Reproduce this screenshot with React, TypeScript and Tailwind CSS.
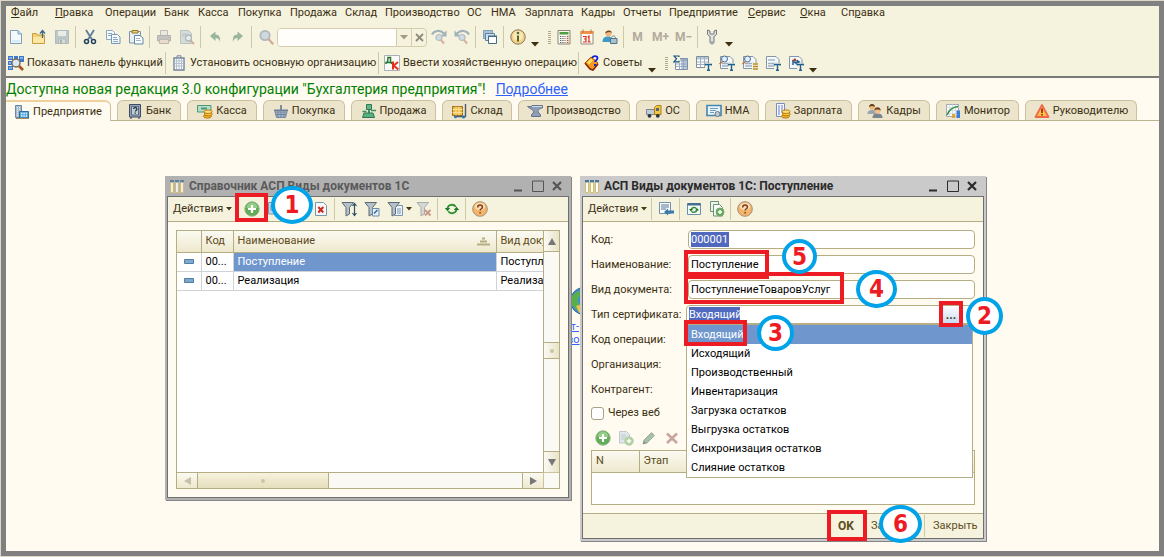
import React from "react";

type Kids = { children?: React.ReactNode };

/* ---------- icons ---------- */

function Svg({ children, dim }: Kids & { dim?: boolean }) {
  return (
    <svg width="16" height="16" viewBox="0 0 16 16" fill="none" aria-hidden="true" className={dim ? "shrink-0 opacity-50" : "shrink-0"}>
      {children}
    </svg>
  );
}

const Page = () => (
  <Svg>
    <path d="M2.500 1.500h7.500l3.500 3.500v9.500h-11z" fill="#f4f9fd" stroke="#7d9db8" />
    <path d="M10 1.500v3.500h3.500" fill="#cfe0ee" stroke="#7d9db8" />
    <path d="M4 11h8v2.500h-8z" fill="#dbe9f4" />
  </Svg>
);
const OpenFolder = () => (
  <Svg>
    <path d="M1.500 4.500h4l1 1.500h7v8.500h-12z" fill="#f3d27c" stroke="#c79d3e" />
    <path d="M2 8h11v6h-11z" fill="#fbe6a4" />
    <path d="M11.500 9V2.500M9 4.500l2.500-3 2.500 3" stroke="#3f6480" strokeWidth="1.300" />
  </Svg>
);
const Floppy = () => (
  <Svg dim>
    <path d="M1.500 1.500h13v13h-13z" fill="#8b9fb3" stroke="#6d8399" />
    <path d="M4 2h8v5H4z" fill="#dfe6ec" />
    <path d="M4.500 10h7v4.500h-7z" fill="#c0c8cf" stroke="#6d8399" />
    <path d="M6 11h2v3H6z" fill="#5d7389" />
  </Svg>
);
const Scissors = () => (
  <Svg>
    <path d="M4 1l6 9.500M12 1L6 10.500" stroke="#5d7e99" strokeWidth="1.800" />
    <circle cx="4.500" cy="12.500" r="2" stroke="#23425e" strokeWidth="1.500" />
    <circle cx="11.500" cy="12.500" r="2" stroke="#23425e" strokeWidth="1.500" />
  </Svg>
);
const CopyDocs = () => (
  <Svg>
    <path d="M1.500 1.500h6l2 2v7h-8z" fill="#f4f9fd" stroke="#8ba8c0" />
    <path d="M3 4.500h4M3 6.500h4" stroke="#8ba8c0" />
    <path d="M6.500 5.500h6l2.500 2.500v6.500h-8.500z" fill="#f4f9fd" stroke="#7896b0" />
    <path d="M8 8.500h4M8 10.500h5M8 12.500h5" stroke="#8ba8c0" />
  </Svg>
);
const Paste = () => (
  <Svg>
    <path d="M1.500 2.500h11v11.500h-11z" fill="#e8eef2" stroke="#8295a5" />
    <path d="M4 1.500h6v2.500H4z" fill="#f2d36b" stroke="#8a7433" />
    <path d="M6.500 6.500h5.500l3 2.500v6h-8.500z" fill="#fdfeff" stroke="#5f88a8" />
    <path d="M8 9.500h4M8 11.500h5" stroke="#9db6c9" />
  </Svg>
);
const Printer = () => (
  <Svg dim>
    <path d="M4.500 1.500h7v5h-7z" fill="#e6dfe0" stroke="#8a8590" />
    <path d="M1.500 6.500h13v5.500h-13z" fill="#8f97a6" stroke="#6f7786" />
    <path d="M3.500 10.500h9v4h-9z" fill="#d9c9c0" stroke="#8a7f80" />
    <path d="M11 8h2v1h-2z" fill="#d66a50" />
  </Svg>
);
const Preview = () => (
  <Svg dim>
    <path d="M1.500 1.500h8l3 3v10h-11z" fill="#b9c9d6" stroke="#7b93a8" />
    <path d="M3 5h5M3 7h4" stroke="#7b93a8" />
    <circle cx="9.500" cy="9" r="3" fill="#d8e6f4" stroke="#69809a" strokeWidth="1.300" />
    <path d="M11.500 11.500l3.500 3.500" stroke="#b06c4a" strokeWidth="2" />
  </Svg>
);
const Undo = () => (
  <Svg dim>
    <path d="M3 7l5.500-4.500v3c4 0 5 3 4.500 7.500-.8-3-2-4-4.500-4v3z" fill="#3f7d5c" />
  </Svg>
);
const Redo = () => (
  <Svg dim>
    <path d="M13 7L7.500 2.500v3c-4 0-5 3-4.500 7.500.8-3 2-4 4.500-4v3z" fill="#3f7d5c" />
  </Svg>
);
const Magnifier = () => (
  <Svg dim>
    <circle cx="7" cy="6.500" r="4.700" fill="#a9c0e0" stroke="#6d7f9e" strokeWidth="1.700" />
    <path d="M10.500 10l4 4.500" stroke="#a76b60" strokeWidth="2.400" strokeLinecap="round" />
  </Svg>
);
const FindTurn = ({ back }: { back?: boolean }) => (
  <Svg dim>
    <g transform={back ? "matrix(-1 0 0 1 16 0)" : undefined}>
      <path d="M1 5.500C3 1.500 9 .5 13 4.500" stroke="#4f7396" strokeWidth="2.200" />
      <path d="M15.500 1.500v6H9.500z" fill="#4f7396" />
    </g>
    <circle cx="8" cy="8.500" r="3" fill="#a9c6ec" stroke="#7a86a0" strokeWidth="1.200" />
    <path d="M10 11l3 3.500" stroke="#b8735e" strokeWidth="2" />
  </Svg>
);
const Windows = () => (
  <Svg>
    <path d="M1.500 1.500h9v8h-9z" fill="#a8c2d6" stroke="#7f9fb6" />
    <path d="M3.500 4.500h9v7h-9z" fill="#cfdfeb" stroke="#5d849f" />
    <path d="M6.500 7.500h8v7h-8z" fill="#fff" stroke="#426c8b" />
    <path d="M6 6.500h9V8H6z" fill="#426c8b" />
  </Svg>
);
const Info = () => (
  <Svg>
    <circle cx="8" cy="8" r="7.200" fill="#f5cf85" stroke="#8b7a5c" />
    <circle cx="8" cy="7" r="5" fill="#fbe7b8" />
    <path d="M8 6.500v6" stroke="#4d6b2c" strokeWidth="2" />
    <circle cx="8" cy="4" r="1.300" fill="#4d6b2c" />
  </Svg>
);
const Calculator = () => (
  <Svg>
    <path d="M2 1.500h12v13.500H2z" fill="#fbf8ee" stroke="#8c8576" />
    <path d="M3.500 3h9v2.500h-9z" fill="#4f9d47" />
    {[7.5, 9.5, 11.5, 13.5].map((y) => (
      <g key={y}>
        <path d={`M4 ${y}h5.500`} stroke="#5c646b" strokeWidth="1.200" strokeDasharray="1.300 1" />
        <path d={`M10.800 ${y}h1.700`} stroke="#c25a3a" strokeWidth="1.200" />
      </g>
    ))}
  </Svg>
);
const Calendar = () => (
  <Svg>
    <path d="M2 2.500h12v12.500H2z" fill="#fdfbf6" stroke="#998b7c" />
    <path d="M1.500 2h13v3h-13z" fill="#ee9148" />
    <path d="M4 .5v3M12 .5v3" stroke="#b5703a" />
    <path d="M4 7.500h3v5.500H4M5 10h2M10 13V7L8.700 8.200M8.700 13h3" stroke="#e0311c" strokeWidth="1.200" />
  </Svg>
);
const UserLock = () => (
  <Svg>
    <path d="M0.500 13c0-4 2-5.500 5.500-5.500s4 1.500 4.500 5.500z" fill="#3d9bc4" />
    <circle cx="6.500" cy="4.500" r="3" fill="#f0b77c" />
    <path d="M3.200 4.500C3 1 10 0 9.800 4c-2-1.500-4.500-1-6.600.5z" fill="#6e4a22" />
    <path d="M9.500 9.500c0-3.500 4-3.500 4 0" stroke="#6d8290" />
    <path d="M8.500 9.500h6.500v5H8.500z" fill="#a9c1d0" stroke="#567286" />
  </Svg>
);
const Wrench = () => (
  <Svg>
    <path d="M3.500 1v4.500L6 7.500V13c0 2.500 4 2.500 4 0V7.500l2.500-2V1L10 2v3H6V2z" fill="#dfe1e2" stroke="#76797b" />
    <circle cx="8" cy="13" r=".8" fill="#76797b" />
  </Svg>
);
const FunctionPanel = () => (
  <Svg>
    <path d="M0 1h5v4H0zM6 1h4v4H6zM11 1h5v6h-5zM0 6h4v4H0zM0 11h5v4H0z" fill="#3b78cf" />
    <path d="M1 3h3M1 8h2M1 13h3M12 3h3" stroke="#cfe2fa" />
    <circle cx="8" cy="8" r="4" fill="#d4e9fb" stroke="#8a6a42" strokeWidth="1.400" />
    <path d="M11 11l4 4" stroke="#a8551d" strokeWidth="2.600" />
  </Svg>
);
const Building = () => (
  <Svg>
    <path d="M3 3h10v12H3z" fill="#fcfdff" stroke="#74849a" strokeWidth="1.400" />
    <path d="M6 2.500V.8h4v1.700" stroke="#74849a" />
    <path d="M5.500 4v10M8 4v10M10.500 4v10M3.500 6h9M3.500 8.500h9M3.500 11h9" stroke="#b3bfce" />
  </Svg>
);
const DebitCredit = () => (
  <Svg>
    <path d="M.5.5h15v15H.5z" fill="#fbfaf6" stroke="#a9b0b8" />
    <path d="M2 9V7.500h5.500V9M3 7.500c1-1 1-3 1-5h2.500v5" stroke="#23752f" strokeWidth="1.500" />
    <path d="M9 6.500v8M14 7l-4.300 3.500 4.600 4" stroke="#e5301d" strokeWidth="2" />
  </Svg>
);
const Advice = () => (
  <Svg>
    <path d="M1 8l6-6 7 6-5 7-3-1z" fill="#f59a1b" stroke="#b34a0c" />
    <path d="M1 8l5 6 3 1 5-6" stroke="#8a2a08" strokeWidth="1.600" />
    <path d="M3 7.500l4-4 2 2-4 4z" fill="#ffe166" />
    <path d="M8.500 3c0-2.500 5-2.500 5 0S11 5 11 7" stroke="#1324d6" strokeWidth="1.800" />
    <path d="M10 9h2v2h-2z" fill="#1324d6" />
  </Svg>
);
const Grid = () => (
  <>
    <path d="M2.500 3.500h12v11h-12z" fill="#fff" stroke="#7d8fa5" />
    <path d="M3 4h11v2.500H3z" fill="#b9c6d4" />
    <path d="M3 9h11M3 11.500h11M6.500 4v10M10.500 4v10" stroke="#9fb0c2" />
  </>
);
const SigmaGrid = () => (
  <Svg>
    <Grid />
    <path d="M8 3h6v11H8z" fill="#7f96b6" opacity=".5" />
    <path d="M0 0h7v8H0z" fill="#f5f2de" />
    <path d="M6 2V1H1l2.500 2.800L1 6.800h5v-1" stroke="#1b5582" strokeWidth="1.200" />
  </Svg>
);
const LetterT = () => <path d="M9.500 10.500v-1h6v1M12.500 9.500v6M11 15.300h3" stroke="#1f618f" strokeWidth="1.400" />;
const GridT = () => (
  <Svg>
    <g transform="translate(-2 -2)"><Grid /></g>
    <path d="M9 8h7v8H9z" fill="#f5f2de" />
    <LetterT />
  </Svg>
);
const Lines = () => (
  <>
    <path d="M1.500 1.500h9.500l3 3v9h-12.500z" fill="#f6f9fc" stroke="#8495a8" />
    <path d="M3 8.500h9M3 11h8" stroke="#9fb0c2" strokeWidth="1.400" />
  </>
);
const Lens = () => (
  <>
    <circle cx="5.500" cy="4" r="3" fill="#dff0ff" stroke="#4e6a8c" />
    <path d="M3.500 6.500L.5 9" stroke="#b5733d" strokeWidth="1.600" />
  </>
);
const FindT = () => (
  <Svg>
    <Lines />
    <Lens />
    <path d="M9 8h7v8H9z" fill="#f5f2de" />
    <LetterT />
  </Svg>
);
const FindList = () => (
  <Svg>
    <Lines />
    <Lens />
    <path d="M10 8h6v8h-6z" fill="#f5f2de" />
    <path d="M11 9h5M11 11.500h5M11 14h5" stroke="#b98c2b" strokeWidth="1.300" />
  </Svg>
);
const LinesT = () => (
  <Svg>
    <Lines />
    <path d="M3 5h7" stroke="#9fb0c2" strokeWidth="1.400" />
    <path d="M9 8h7v8H9z" fill="#f5f2de" />
    <LetterT />
  </Svg>
);
const ChartT = () => (
  <Svg>
    <path d="M1.500 1.500h9.500l3 3v9h-12.500z" fill="#f6f9fc" stroke="#8495a8" />
    <path d="M5 10V6l3 2.500V7h3" stroke="#2e628e" strokeWidth="1.500" />
    <path d="M4 6l3-3 2 3z" fill="#a3442c" />
    <path d="M9 4.500L12.500 7 9 9z" fill="#2e628e" />
    <path d="M9 8.500h7V16H9z" fill="#f5f2de" />
    <LetterT />
  </Svg>
);

/* tab icons */
const Enterprise = () => (
  <Svg>
    <path d="M1.500 1.500h6v12h-6z" fill="#a9bdd0" stroke="#6c87a2" />
    <path d="M3 3.500h3M3 5.500h3M3 7.500h3M3 9.500h3M3 11.500h3" stroke="#eef4fa" strokeDasharray="1 1" />
    <path d="M5.500 7.500h9v6.500h-9z" fill="#58a6d8" stroke="#2d6f9f" />
    <path d="M7 9.500h6M7 12h6" stroke="#e8f5ff" strokeWidth="1.400" strokeDasharray="1.400 1" />
    <path d="M2 14.500h13" stroke="#a98b5c" />
  </Svg>
);
const Safe = () => (
  <Svg>
    <path d="M2.500 1.500h11v12.500h-11z" fill="#94a3b6" stroke="#3e4c60" />
    <path d="M4.500 3.500h7v8.500h-7z" fill="#c4ced9" stroke="#5c6b80" />
    <path d="M6.500 6c0-2 3.500-1.800 3.500.2 0 1-1.500 1-1.700 2.300M8.200 9.500v1.200" stroke="#1d2a3a" strokeWidth="1.200" />
    <path d="M3 15h2M11 15h2" stroke="#2b3848" />
  </Svg>
);
const Coins = () => (
  <>
    <ellipse cx="10.500" cy="13.300" rx="4" ry="1.800" fill="#f0b32a" stroke="#b87a10" />
    <ellipse cx="11.300" cy="11" rx="4" ry="1.800" fill="#f7c843" stroke="#b87a10" />
    <ellipse cx="11" cy="8.700" rx="4" ry="1.800" fill="#ffe07a" stroke="#b87a10" />
  </>
);
const Cash = () => (
  <Svg>
    <path d="M.5 2.500h13.500v6.500H.5z" fill="#b5dfc4" stroke="#4c967a" />
    <path d="M4 5.500h6" stroke="#4c967a" strokeWidth="2" />
    <Coins />
  </Svg>
);
const Basket = () => (
  <Svg>
    <path d="M8 2v5" stroke="#5e6f88" strokeWidth="1.500" />
    <path d="M1 7.500h14" stroke="#6c7f9c" strokeWidth="2" />
    <path d="M2 9h12l-1.500 5.500h-9z" fill="#a9b8cc" stroke="#75879f" />
    <path d="M5 9v5M8 9v5M11 9v5M3 11.500h10" stroke="#71839c" />
  </Svg>
);
const Scale = () => (
  <Svg>
    <path d="M5.500 1.500h5v5h-5z" fill="#63b587" stroke="#2d7b51" />
    <path d="M7 7h2v3H7z" fill="#3c8f61" />
    <path d="M1.500 8.500h4M10 7.500h5" stroke="#3c8f61" strokeWidth="1.600" />
    <path d="M3 10h9l1.500 4.500h-12z" fill="#5bae80" stroke="#2d7b51" />
  </Svg>
);
const Cart = () => (
  <Svg>
    <path d="M1.500 3.500h10v9h-10z" fill="#efb943" stroke="#9b6d1c" />
    <path d="M1.500 6.500h10M1.500 9.500h10M5 3.500v9M8 3.500v9" stroke="#fbe29b" />
    <path d="M14.500 1v12.500H3" stroke="#4b5a6c" strokeWidth="1.400" />
    <circle cx="4.500" cy="14" r="1.300" fill="#2f77b5" />
    <circle cx="12.500" cy="14" r="1.500" fill="#2f77b5" />
  </Svg>
);
const Anvil = () => (
  <Svg>
    <path d="M.5 3.500H5v-1h10.500V5C12 5.500 11 7 11 9l2.500 2.500v2H4.500v-2L7 9C6.500 6.500 3 6 .5 3.500z" fill="#8d9db5" stroke="#65758e" />
    <path d="M5 3.500h10" stroke="#d3dce8" />
  </Svg>
);
const Truck = () => (
  <Svg>
    <path d="M.5 6.500h8v5h-8z" fill="#c0cbd6" stroke="#7c8896" />
    <path d="M8.500 11.500v-7l2-2h4.500v9z" fill="#f3c53e" stroke="#a87f1b" />
    <path d="M10 5h3v3h-3z" fill="#52697f" />
    <circle cx="3.500" cy="12.800" r="1.900" fill="#2e343b" />
    <circle cx="11.800" cy="12.800" r="1.900" fill="#2e343b" />
  </Svg>
);
const Certificate = () => (
  <Svg>
    <path d="M1 2.500h14v10H1z" fill="#eaf4fb" stroke="#4387ab" strokeWidth="1.600" />
    <path d="M4 5.500h8M4 7.500h6M4 9.500h4" stroke="#6b9cb8" />
    <circle cx="11.500" cy="11" r="2.500" fill="#c3ccd5" stroke="#66788a" />
  </Svg>
);
const Payroll = () => (
  <Svg>
    <path d="M1.500.5h8v13h-8z" fill="#f5f8fd" stroke="#7590c0" />
    <path d="M3 3h5M3 5h5M3 7h5M3 9h4M3 11h3" stroke="#6f7fc0" strokeDasharray="2 1" />
    <Coins />
  </Svg>
);
const People = () => (
  <Svg>
    <path d="M.5 11c0-3 1.500-4 4.500-4s4 1 4 4z" fill="#9aa4ae" />
    <circle cx="5" cy="4" r="2.700" fill="#eeb57a" />
    <path d="M2 4c0-4 6-4 6 0-2-1.300-4-1.300-6 0z" fill="#5b3917" />
    <path d="M5.500 15c0-3.800 2-4.500 5-4.500s5 .7 5 4.500z" fill="#7b858f" />
    <circle cx="10.500" cy="7.500" r="3" fill="#f2bd85" />
    <path d="M7.200 7.500c0-4.500 6.600-4.500 6.600 0-2-1.500-4.500-1.500-6.600 0z" fill="#6a4420" />
  </Svg>
);
const Monitor = () => (
  <Svg>
    <path d="M1.500 1.500h12v12h-12z" fill="#fbfcfd" stroke="#9da7b0" />
    <path d="M4.500 1.500v12M7.500 1.500v12M10.500 1.500v12M1.500 4.500h12M1.500 7.500h12M1.500 10.500h12" stroke="#d9dee3" />
    <path d="M2 12C4 7 8 4 13 3.500" stroke="#2f9140" strokeWidth="1.600" />
    <path d="M7 11h3v4H7z" fill="#e1a92c" />
    <path d="M11.500 7.500h3.500V15h-3.500z" fill="#3a7fd5" />
  </Svg>
);
const Warning = () => (
  <Svg>
    <path d="M8 2l6.500 12h-13z" fill="#fdc541" stroke="#f0674c" strokeWidth="1.800" strokeLinejoin="round" />
    <path d="M8 5.500V10M8 11v1.600" stroke="#9c2412" strokeWidth="1.700" />
  </Svg>
);

/* window icons */
const TableIcon = ({ faded }: { faded?: boolean }) => (
  <svg width="14" height="13" viewBox="0 0 14 13" fill="none" aria-hidden="true" className={faded ? "opacity-80" : ""}>
    {[0, 5, 10].map((x) => (
      <g key={x}>
        <path d={`M${x} 0h4v13h-4z`} fill="#fffdf2" />
        <path d={`M${x} 0h4v2.500h-4z`} fill="#4b7696" />
        <path d={`M${x + 0.5} 2.500v10h3v-10`} stroke="#d6bf69" />
      </g>
    ))}
  </svg>
);
const Plus = () => (
  <Svg>
    <circle cx="8" cy="8" r="7.200" fill="#5fae55" stroke="#94b48c" />
    <path d="M2.500 7a5.500 5.500 0 0 1 11 0z" fill="#92cd85" />
    <path d="M8 4v8M4 8h8" stroke="#fff" strokeWidth="2.200" />
  </Svg>
);
const PagePlus = ({ dim }: { dim?: boolean }) => (
  <Svg dim={dim}>
    <path d="M1.500 1.500h7l3 3v8.500h-10z" fill="#c5d6e6" stroke="#7d97ad" />
    <path d="M3 5h5M3 7h5M3 9h4" stroke="#7d97ad" />
    <circle cx="11" cy="11" r="4.300" fill="#5fae55" stroke="#7ea276" />
    <path d="M11 8.700v4.600M8.700 11h4.600" stroke="#fff" strokeWidth="1.500" />
  </Svg>
);
const PagesPlus = () => (
  <Svg>
    <path d="M1.500.5h8v10h-8z" fill="#eef5ea" stroke="#6c9078" />
    <path d="M4.500 3.500h6l3 3v8.500h-9z" fill="#f7fbf5" stroke="#6c9078" />
    <circle cx="11" cy="11" r="4" fill="#5fae55" stroke="#7ea276" />
    <path d="M11 8.900v4.200M8.900 11h4.200" stroke="#fff" strokeWidth="1.500" />
  </Svg>
);
const PageDelete = () => (
  <Svg>
    <path d="M2.500 1.500h8l3 3v10h-11z" fill="#f8fbfd" stroke="#7896b0" />
    <path d="M5.300 6l5 5.500M10.300 6l-5 5.500" stroke="#d4261c" strokeWidth="2" />
  </Svg>
);
const FunnelShape = () => <path d="M1 1.500h11.500l-4 5v6.500l-3.500 2V6.500z" fill="#b6c0c8" stroke="#5d6b76" />;
const FunnelSort = () => (
  <Svg>
    <FunnelShape />
    <path d="M13.500 3v11M11.500 5l2-2.500 2 2.500M11.500 12l2 2.500 2-2.500" stroke="#2f4f6b" strokeWidth="1.200" />
  </Svg>
);
const FunnelEdit = () => (
  <Svg>
    <FunnelShape />
    <path d="M8.500 7.500h6.500v7.500H8.500z" fill="#e8f1f9" stroke="#6d8ca8" />
    <path d="M10 12.500l3.500-3.500" stroke="#2d6f9f" strokeWidth="1.600" />
  </Svg>
);
const FunnelList = () => (
  <Svg>
    <path d="M7.500 4.500h8v10h-8z" fill="#eef5fa" stroke="#7896b0" />
    <FunnelShape />
    <path d="M10 8h4M10 10h4M10 12h4" stroke="#7896b0" />
  </Svg>
);
const FunnelClear = () => (
  <Svg dim>
    <FunnelShape />
    <path d="M9 9l5.500 5.500M14.500 9L9 14.500" stroke="#a8452f" strokeWidth="2" />
  </Svg>
);
const Refresh = () => (
  <Svg>
    <path d="M3.500 7.500c.5-4 6-5 8.300-1.800M12.500 8.500c-.5 4-6 5-8.300 1.800" stroke="#2f9130" strokeWidth="1.800" />
    <path d="M.8 7h5.400L3.500 10.300zM15.200 9H9.800l2.700-3.300z" fill="#1e7a22" />
  </Svg>
);
const Help = () => (
  <Svg>
    <circle cx="8" cy="8" r="7.300" fill="#f3b56c" stroke="#a98d74" />
    <ellipse cx="8" cy="5.500" rx="5.200" ry="3.800" fill="#fbdcae" />
    <path d="M5.700 6.500c0-3.300 4.700-3 4.700-.3 0 1.600-2.200 1.500-2.300 3.300M8.100 11v1.600" stroke="#7b3f22" strokeWidth="1.500" />
  </Svg>
);
const GoTo = () => (
  <Svg>
    <path d="M1.500 1.500h11v11h-11z" fill="#f8fbfd" stroke="#7591aa" />
    <path d="M3 4h8M3 6h8M3 8h5" stroke="#56758f" />
    <path d="M6 11l4-3.500v2h6v3h-6v2z" fill="#3a79a8" />
  </Svg>
);
const RefreshPage = () => (
  <Svg>
    <path d="M1.500 2.500h13v11h-13z" fill="#f6fafc" stroke="#6d8ea8" />
    <path d="M1.500 2h13v2.500h-13z" fill="#447091" />
    <path d="M5 8.500c1-2.500 4.500-2.500 5.500-.8M11 9.300c-1 2.500-4.500 2.500-5.500.8" stroke="#2f9130" strokeWidth="1.400" />
    <path d="M3 8h4l-2 2.500zM13 9.500H9L11 7z" fill="#1e7a22" />
  </Svg>
);
const Pencil = () => (
  <Svg dim>
    <path d="M2 14l1-4 7.500-7.500 3 3L6 13z" fill="#4f8a5c" stroke="#3f5f55" />
    <path d="M2 14l1-3 2 2z" fill="#222" />
  </Svg>
);
const Cross = () => (
  <Svg dim>
    <path d="M3 3.500l10 9.500M13 3.500L3 13" stroke="#94524c" strokeWidth="2.600" />
  </Svg>
);

/* ---------- small controls ---------- */

function Tool({ label, children }: Kids & { label: string }) {
  return (
    <button type="button" aria-label={label} className="flex h-5 w-[23px] shrink-0 items-center justify-center">
      {children}
    </button>
  );
}
const Sep = () => (
  <span className="flex w-[5px] shrink-0 justify-center">
    <span className="h-[22px] w-px bg-[#cdc8a8]" />
  </span>
);
const Caret = () => (
  <svg width="8" height="5" viewBox="0 0 8 5" aria-hidden="true">
    <path d="M0 0h8L4 4.500z" fill="#3b2f12" />
  </svg>
);
const SmallCaret = () => (
  <svg width="6" height="4" viewBox="0 0 6 4" aria-hidden="true"><path d="M0 0h6L3 3.500z" fill="#4a3a12" /></svg>
);
const More = () => (
  <button type="button" aria-label="Ещё" className="flex h-5 w-[11px] shrink-0 items-end justify-center">
    <Caret />
  </button>
);
const Grip = () => (
  <span className="ml-1.5 flex w-1.5 shrink-0 flex-col items-center gap-px">
    {[0, 1, 2, 3, 4, 5, 6].map((i) => (
      <span key={i} className="h-px w-[3px] bg-[#b3ab88]" />
    ))}
  </span>
);

const menu: [string, string, string, string][] = [
  ["", "Ф", "айл", "w-11"],
  ["", "П", "равка", "w-[50px]"],
  ["Операции", "", "", "w-[59px]"],
  ["Банк", "", "", "w-[34px]"],
  ["Касса", "", "", "w-10"],
  ["Покупка", "", "", "w-[52px]"],
  ["Продажа", "", "", "w-[55px]"],
  ["Склад", "", "", "w-10"],
  ["Производство", "", "", "w-[82px]"],
  ["ОС", "", "", "w-6"],
  ["НМА", "", "", "w-[34px]"],
  ["Зарплата", "", "", "w-14"],
  ["Кадры", "", "", "w-[42px]"],
  ["Отчеты", "", "", "w-[46px]"],
  ["Предприятие", "", "", "w-[79px]"],
  ["", "С", "ервис", "w-[52px]"],
  ["", "О", "кна", "w-[41px]"],
  ["Сп", "р", "авка", "w-[50px]"],
];

const tabs: [string, () => React.ReactElement, string][] = [
  ["Предприятие", Enterprise, "w-[105px]"],
  ["Банк", Safe, "w-16"],
  ["Касса", Cash, "w-[70px]"],
  ["Покупка", Basket, "w-[82px]"],
  ["Продажа", Scale, "w-[85px]"],
  ["Склад", Cart, "w-[70px]"],
  ["Производство", Anvil, "w-28"],
  ["ОС", Truck, "w-[54px]"],
  ["НМА", Certificate, "w-[63px]"],
  ["Зарплата", Payroll, "w-[87px]"],
  ["Кадры", People, "w-[72px]"],
  ["Монитор", Monitor, "w-[83px]"],
  ["Руководителю", Warning, "w-28"],
];

const certTypes = [
  "Входящий",
  "Исходящий",
  "Производственный",
  "Инвентаризация",
  "Загрузка остатков",
  "Выгрузка остатков",
  "Синхронизация остатков",
  "Слияние остатков",
];

/* ---------- page parts ---------- */

function Header() {
  return (
    <header className="whitespace-nowrap border-b-2 border-[#7b7b76] bg-[#f5f2de]">
      <nav className="flex h-[18px] items-center pb-1 pl-[5px]">
        {menu.map(([a, key, b, w]) => (
          <button key={a + key + b} type="button" className={`shrink-0 text-left ${w}`}>
            {a}
            {key && <span className="underline">{key}</span>}
            {b}
          </button>
        ))}
      </nav>
      <div className="-ml-0.5 flex h-[26px] items-center">
        <Tool label="Новый"><Page /></Tool>
        <Tool label="Открыть"><OpenFolder /></Tool>
        <Tool label="Сохранить"><Floppy /></Tool>
        <Sep />
        <Tool label="Вырезать"><Scissors /></Tool>
        <Tool label="Копировать"><CopyDocs /></Tool>
        <Tool label="Вставить"><Paste /></Tool>
        <Sep />
        <Tool label="Печать"><Printer /></Tool>
        <Tool label="Просмотр"><Preview /></Tool>
        <Sep />
        <Tool label="Отменить"><Undo /></Tool>
        <Tool label="Повторить"><Redo /></Tool>
        <Sep />
        <Tool label="Найти"><Magnifier /></Tool>
        <div className="flex h-[19px] w-[150px] shrink-0 overflow-hidden rounded border border-[#d3cdae]">
          <input aria-label="Строка поиска" className="min-w-0 flex-1 bg-[#fffefa] px-1 outline-none" />
          <button type="button" aria-label="Список" className="flex w-[15px] items-center justify-center border-l border-[#d3cdae]">
            <svg width="8" height="5" viewBox="0 0 8 5" aria-hidden="true"><path d="M0 0h8L4 4.500z" fill="#a39c82" /></svg>
          </button>
          <button type="button" aria-label="Очистить" className="flex w-[15px] items-center justify-center border-l border-[#d3cdae]">
            <svg width="9" height="9" viewBox="0 0 9 9" aria-hidden="true"><path d="M1 1l7 7M8 1L1 8" stroke="#8f8a7a" strokeWidth="1.800" /></svg>
          </button>
        </div>
        <Tool label="Найти далее"><FindTurn /></Tool>
        <Tool label="Найти ранее"><FindTurn back /></Tool>
        <Sep />
        <Tool label="Окна"><Windows /></Tool>
        <Sep />
        <Tool label="Справка"><Info /></Tool>
        <More />
        <Grip />
        <Tool label="Калькулятор"><Calculator /></Tool>
        <Tool label="Календарь"><Calendar /></Tool>
        <Tool label="Пользователи"><UserLock /></Tool>
        <Sep />
        <button type="button" className="w-[23px] shrink-0 text-center text-xs font-bold text-[#b3aa9c]">M</button>
        <button type="button" className="w-[23px] shrink-0 text-center text-xs font-bold text-[#b3aa9c]">M+</button>
        <button type="button" className="w-[23px] shrink-0 text-center text-xs font-bold text-[#b3aa9c]">M−</button>
        <Sep />
        <Tool label="Настройка"><Wrench /></Tool>
        <More />
      </div>
      <div className="flex h-[26px] items-center">
        <button type="button" className="flex w-[157px] shrink-0 items-center gap-[3px] pl-0.5"><FunctionPanel />Показать панель функций</button>
        <Sep />
        <button type="button" className="flex w-52 shrink-0 items-center gap-[3px] pl-[3px]"><Building />Установить основную организацию</button>
        <Sep />
        <button type="button" className="flex w-[195px] shrink-0 items-center gap-[3px] pl-[3px]"><DebitCredit />Ввести хозяйственную операцию</button>
        <Sep />
        <button type="button" className="flex w-[65px] shrink-0 items-center gap-[3px] pl-[3px]"><Advice />Советы</button>
        <More />
        <Grip />
        <Tool label="Обороты"><SigmaGrid /></Tool>
        <Tool label="Ведомость"><GridT /></Tool>
        <Tool label="Анализ"><FindT /></Tool>
        <Tool label="Карточка"><FindList /></Tool>
        <Tool label="Отчет"><LinesT /></Tool>
        <Tool label="Диаграмма"><ChartT /></Tool>
        <More />
      </div>
    </header>
  );
}

function Tabs() {
  return (
    <div role="tablist" className="flex h-[21px] gap-1.5 border-b border-[#b9b28c]">
      {tabs.map(([name, Icon, w], i) => (
        <button
          key={name}
          type="button"
          role="tab"
          aria-selected={i === 0}
          className={`flex shrink-0 items-center justify-center gap-[3px] border ${w} ${
            i === 0
              ? "-mb-px rounded-tr-md border-b-0 border-l-0 border-t-2 border-[#c9c19f] border-t-[#edd09b] bg-[#fffbf0]"
              : "rounded-t-md border-b-0 border-[#c9c19f] bg-[#ece5cc]"
          }`}
        >
          <Icon />
          {name}
        </button>
      ))}
    </div>
  );
}

function TitleBar({ title, active }: { title: string; active?: boolean }) {
  const ink = active ? "#2b2b2b" : "#555";
  return (
    <div className={`flex h-5 items-center pl-[3px] pr-[3px] ${active ? "bg-[#cacaca] text-[#2b2b2b]" : "bg-[#b1b1b1] text-[#5a5a5a]"}`}>
      <TableIcon faded={!active} />
      <h2 className="ml-[5px] flex-1 whitespace-nowrap text-xs font-bold">{title}</h2>
      <button type="button" aria-label="Свернуть" className="flex w-5 justify-center"><svg width="12" height="12" viewBox="0 0 12 12"><path d="M2 10.500h8" stroke={ink} strokeWidth="2" /></svg></button>
      <button type="button" aria-label="Развернуть" className="flex w-5 justify-center"><svg width="12" height="12" viewBox="0 0 12 12" fill="none"><path d="M.5 1h11v10.500H.5z" stroke={ink} /></svg></button>
      <button type="button" aria-label="Закрыть окно" className="flex w-[18px] justify-center"><svg width="12" height="12" viewBox="0 0 12 12"><path d="M2 2l8 8M10 2l-8 8" stroke={ink} strokeWidth="2.200" /></svg></button>
    </div>
  );
}

const Actions = () => (
  <button type="button" className="flex w-16 shrink-0 items-center justify-between pl-[5px]">
    Действия
    <SmallCaret />
  </button>
);

const head = "border-r border-b border-[#b5ae85] bg-linear-to-b from-[#fbfaf2] to-[#eee8cd] text-left font-normal text-[#5d4c1b]";
const windowBox = "absolute top-[55px] w-[406px] border-x-2 border-b-2 bg-[#fffbf0] shadow-[1px_1px_0_#858585]";

function ListWindow() {
  return (
    <section className={`left-[159px] border-[#b1b1b1] ${windowBox}`}>
      <TitleBar title="Справочник АСП Виды документов 1С" />
      <div className="border border-[#6f6f6f]">
        <div className="flex h-[25px] items-center border-b border-[#b5ae85] bg-[#f5f2de]">
          <Actions />
          <span className="ml-2" />
          <Tool label="Добавить"><Plus /></Tool>
          <Tool label="Добавить копированием"><PagePlus /></Tool>
          <Tool label="Изменить"><Page /></Tool>
          <Tool label="Удалить"><PageDelete /></Tool>
          <Sep />
          <Tool label="Отбор и сортировка"><FunnelSort /></Tool>
          <Tool label="Отбор по значению"><FunnelEdit /></Tool>
          <Tool label="История отборов"><FunnelList /></Tool>
          <SmallCaret />
          <Tool label="Отключить отбор"><FunnelClear /></Tool>
          <Sep />
          <Tool label="Обновить"><Refresh /></Tool>
          <Sep />
          <Tool label="Помощь"><Help /></Tool>
        </div>
        <div className="m-2 grid grid-cols-[1fr_16px] grid-rows-[241px_16px] border border-[#b5ae85] bg-white text-black">
          <div className="overflow-hidden">
            <table className="w-full table-fixed border-collapse whitespace-nowrap">
              <thead>
                <tr className="h-[21px]">
                  <th className={`w-6 ${head}`} />
                  <th className={`w-8 pl-1 ${head}`}>Код</th>
                  <th className={`w-[263px] pl-1 ${head}`}>
                    <span className="flex items-center justify-between pr-1.5">
                      Наименование
                      <svg width="13" height="9" viewBox="0 0 13 9" aria-hidden="true"><path d="M5 .5h3v2H5zM3 3.500h7v2H3zM0 6.500h13v2H0z" fill="#b5ae85" /></svg>
                    </span>
                  </th>
                  <th className={`overflow-hidden border-r-0 pl-1 ${head}`}>Вид документа</th>
                </tr>
              </thead>
              <tbody>
                {["Поступление", "Реализация"].map((name, i) => (
                  <tr key={name} className="h-[19px]">
                    <td className="border-r border-b border-[#cfd2d6]">
                      <svg width="10" height="5" viewBox="0 0 10 5" aria-hidden="true" className="mx-auto"><path d="M.5.500h9v4h-9z" fill="#7fa8cc" stroke="#4f7fa8" /></svg>
                    </td>
                    <td className="border-r border-b border-[#cfd2d6] pl-1">00...</td>
                    <td className={`border-r border-b border-[#cfd2d6] pl-1 ${i === 0 ? "bg-[#6f97ce] text-white" : ""}`}>{name}</td>
                    <td className="overflow-hidden border-b border-[#cfd2d6] pl-1">{name}</td>
                  </tr>
                ))}
              </tbody>
            </table>
          </div>
          <div className="flex flex-col border-l border-[#b5ae85] bg-[#faf9f4]">
            <button type="button" aria-label="Вверх" className="flex h-[21px] items-center justify-center border-b border-[#b5ae85] bg-linear-to-r from-[#fbfaf2] to-[#e9e3c8]">
              <svg width="8" height="7" viewBox="0 0 8 7"><path d="M4 0l4 7H0z" fill="#77767a" /></svg>
            </button>
            <span className="h-[90px]" />
            <span className="flex h-[17px] items-center justify-center border-y border-[#b5ae85] bg-linear-to-r from-[#fbfaf2] to-[#e9e3c8]">
              <span className="size-1 rounded-full bg-[#cbc5a5]" />
            </span>
            <span className="flex-1" />
            <button type="button" aria-label="Вниз" className="flex h-[21px] items-center justify-center border-t border-[#b5ae85] bg-linear-to-r from-[#fbfaf2] to-[#e9e3c8]">
              <svg width="8" height="7" viewBox="0 0 8 7"><path d="M4 7l4-7H0z" fill="#77767a" /></svg>
            </button>
          </div>
          <div className="flex border-t border-[#b5ae85] bg-[#faf9f4]">
            <button type="button" aria-label="Влево" className="flex w-[21px] items-center justify-center border-r border-[#b5ae85] bg-linear-to-b from-[#fbfaf2] to-[#eee8cd]">
              <svg width="7" height="8" viewBox="0 0 7 8"><path d="M0 4l7-4v8z" fill="#c5c0aa" /></svg>
            </button>
            <span className="flex w-[131px] items-center justify-center border-r border-[#b5ae85] bg-linear-to-b from-[#f6f2dd] to-[#e6dfbd]">
              <span className="size-1 rounded-full bg-[#cbc5a5]" />
            </span>
            <span className="flex-1" />
            <button type="button" aria-label="Вправо" className="flex w-[21px] items-center justify-center border-l border-[#b5ae85] bg-linear-to-b from-[#fbfaf2] to-[#eee8cd]">
              <svg width="7" height="8" viewBox="0 0 7 8"><path d="M7 4L0 0v8z" fill="#77767a" /></svg>
            </button>
          </div>
          <span className="border-l border-t border-[#c9c3a0] bg-[#faf9f4]" />
        </div>
      </div>
    </section>
  );
}

const box = "flex h-[19px] items-center rounded border border-[#b5ae85] bg-white pl-0.5";

function Row({ id, label, value, picked }: { id: string; label: string; value: string; picked?: boolean }) {
  return (
    <div className="flex items-center">
      <label htmlFor={id} className="w-[97px] shrink-0">{label}</label>
      <div className={`flex-1 ${box}`}>
        <input id={id} defaultValue={value} className={`h-[15px] outline-none ${picked ? "w-[38px] bg-[#5069be] text-white" : "w-full text-black"}`} />
      </div>
    </div>
  );
}

function FormWindow() {
  return (
    <section className={`left-[574px] border-[#cacaca] ${windowBox}`}>
      <TitleBar title="АСП Виды документов 1С: Поступление" active />
      <div className="border border-[#6f6f6f]">
        <div className="flex h-[25px] items-center border-b border-[#b5ae85] bg-[#f5f2de]">
          <Actions />
          <span className="ml-0.5" />
          <Sep />
          <Tool label="Перейти"><GoTo /></Tool>
          <Sep />
          <Tool label="Перечитать"><RefreshPage /></Tool>
          <Tool label="Скопировать"><PagesPlus /></Tool>
          <Sep />
          <Tool label="Помощь"><Help /></Tool>
        </div>
        <form className="flex flex-col gap-1.5 px-2 pt-2">
          <Row id="code" label="Код:" value="000001" picked />
          <Row id="name" label="Наименование:" value="Поступление" />
          <Row id="doc" label="Вид документа:" value="ПоступлениеТоваровУслуг" />
          <div className="relative flex items-center">
            <label htmlFor="cert" className="w-[95px] shrink-0 whitespace-nowrap">Тип сертификата:</label>
            <div className={`mr-0.5 flex-1 ${box}`}>
              <input id="cert" defaultValue="Входящий" className="h-[15px] w-[51px] bg-[#5069be] text-white outline-none" />
              <button type="button" aria-label="Выбрать" className="ml-auto mr-[13px] flex h-[17px] w-4 items-end justify-center bg-linear-to-b from-[#fdfeff] to-[#c9dcf3] text-xs font-bold text-[#4a3a12]">...</button>
            </div>
            <ul role="listbox" aria-label="Тип сертификата" className="absolute left-[95px] right-0.5 top-[19px] border border-[#b5ae85] bg-white text-black">
              {certTypes.map((t, i) => (
                <li key={t} role="option" aria-selected={i === 0} className={`h-[19px] pl-1 leading-5 ${i === 0 ? "bg-[#6f97ce] text-white" : ""}`}>{t}</li>
              ))}
            </ul>
          </div>
          {[["op", "Код операции:"], ["org", "Организация:"], ["agent", "Контрагент:"]].map(([id, label]) => (
            <div key={id} className="flex h-[19px] items-center">
              <label htmlFor={id} className="w-[97px] shrink-0">{label}</label>
              <input id={id} className="h-[17px] w-[200px] bg-white" />
            </div>
          ))}
          <label className="flex items-center gap-1">
            <input type="checkbox" className="size-[13px] appearance-none rounded-[3px] border border-[#a8a186] bg-white" />
            Через веб
          </label>
        </form>
        <div className="flex h-[29px] items-center pl-2 pt-1">
          <Tool label="Добавить строку"><Plus /></Tool>
          <Tool label="Скопировать строку"><PagePlus dim /></Tool>
          <Tool label="Изменить строку"><Pencil /></Tool>
          <Tool label="Удалить строку"><Cross /></Tool>
        </div>
        <div className="mx-2 h-[55px] border border-[#b5ae85] bg-white">
          <table className="w-full table-fixed border-collapse">
            <thead>
              <tr className="h-[21px]">
                <th className={`w-[47px] pl-1 ${head}`}>N</th>
                <th className={`border-r-0 pl-1 ${head}`}>Этап</th>
              </tr>
            </thead>
          </table>
        </div>
        <footer className="mt-2 flex h-[25px] items-center justify-end border-t border-[#b5ae85] bg-[#f5f2de] pr-2 text-[#5d4c1b]">
          <button type="button" className="w-[33px] text-left text-xs font-bold">OK</button>
          <button type="button" className="w-[51px] text-left">Записать</button>
          <Sep />
          <button type="button" className="ml-1.5 w-[42px] text-left">Закрыть</button>
        </footer>
      </div>
    </section>
  );
}

const frames = [
  "left-[235px] top-[193px] h-[29px] w-[33px]",
  "left-[684px] top-[250px] h-[29px] w-[85px]",
  "left-[684px] top-[272px] h-8 w-40",
  "left-[684px] top-[320px] h-[26px] w-[63px]",
  "left-[939px] top-[301px] h-[26px] w-6",
  "left-[827px] top-[510px] h-[31px] w-10",
];
const marks: [string, string][] = [
  ["1", "left-[271px] top-[186px] h-[38px] w-[42px]"],
  ["2", "left-[966px] top-[297px] h-[38px] w-[37px]"],
  ["3", "left-[757px] top-[315px] h-9 w-[37px]"],
  ["4", "left-[856px] top-[270px] h-[38px] w-[41px]"],
  ["5", "left-[782px] top-[239px] h-[35px] w-[35px]"],
  ["6", "left-[879px] top-[505px] h-[38px] w-[43px]"],
];

export default function App() {
  return (
    <div className="relative flex min-h-screen flex-col overflow-hidden bg-[#dcd8c6] pb-px pl-px pt-px font-['Roboto','Liberation_Sans',sans-serif] text-[11px] leading-4 text-[#3b2f12]">
      <div className="flex flex-1 flex-col overflow-hidden border-5 border-[#808080] bg-[#fffbf0]">
        <Header />
        <p className="flex h-[22px] items-center gap-2.5 whitespace-nowrap text-sm text-[#008000]">
          Доступна новая редакция 3.0 конфигурации "Бухгалтерия предприятия"!
          <a href="#more" className="text-[#2f62ff] underline">Подробнее</a>
        </p>
        <Tabs />
        <main className="relative flex-1">
          <div className="absolute left-[561px] top-[165px] flex w-3 flex-col text-right text-[#2f62ff]">
            <svg width="30" height="30" viewBox="0 0 30 30" aria-hidden="true" className="shrink-0 self-start">
              <circle cx="17" cy="15" r="13.500" fill="#3f8fd6" stroke="#2a5e96" />
              <path d="M4 12c3-6 8-8 10-6s-4 5-3 9 4 6 1 9C8 24 3 18 4 12z" fill="#59b04b" />
              <path d="M9 20l6-2 2 6-5 3z" fill="#e7c34a" />
            </svg>
            <a href="#internet" className="mt-1 leading-[13px] underline">т-<br />во</a>
          </div>
          <ListWindow />
          <FormWindow />
        </main>
      </div>
      <div className="pointer-events-none absolute inset-0">
        {frames.map((f) => (
          <span key={f} className={`absolute border-4 border-[#ed1c24] ${f}`} />
        ))}
        {marks.map(([n, pos]) => (
          <span key={n} className={`absolute flex items-center justify-center rounded-[50%] border-4 border-[#00a2e8] bg-white font-['DejaVu_Sans_Condensed','DejaVu_Sans',sans-serif] text-2xl font-bold text-[#ed1c24] ${pos}`}>
            {n}
          </span>
        ))}
      </div>
    </div>
  );
}
